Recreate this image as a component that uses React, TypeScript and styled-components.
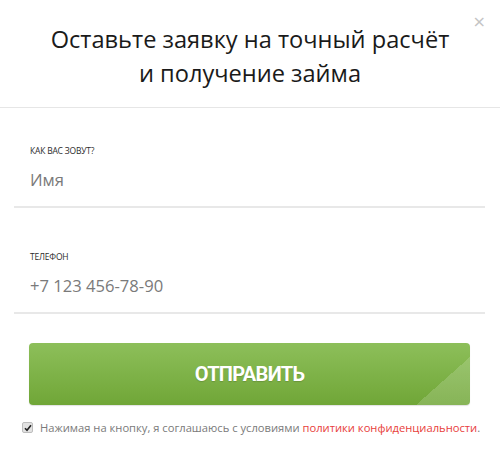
import styled, { createGlobalStyle } from "styled-components";

const GlobalStyle = createGlobalStyle`
  body {
    margin: 0;
    background: #ffffff;
    font-family: "Open Sans", "Noto Sans", sans-serif;
  }
`;

const Modal = styled.div`
  width: 500px;
  height: 462px;
  background: #ffffff;
  display: flex;
  flex-direction: column;
  position: relative;
`;

const Header = styled.div`
  padding: 22px 0 17px 0;
  border-bottom: 1px solid #e6e6e6;
`;

const Title = styled.h2`
  margin: 0;
  text-align: center;
  font-weight: 400;
  font-size: 23.6px;
  line-height: 34px;
  color: #1a1a1a;
`;

const Close = styled.span`
  position: absolute;
  top: 12px;
  right: 14px;
  font-size: 16px;
  line-height: 20px;
  color: #c4c4c4;
  font-family: "DejaVu Sans", sans-serif;
`;

const Form = styled.form`
  display: flex;
  flex-direction: column;
  padding: 0 15px 0 14px;
`;

const Field = styled.label<{ $top: number }>`
  display: flex;
  flex-direction: column;
  gap: 12px;
  margin-top: ${(p) => p.$top}px;
  padding: 0 0 15px 16px;
  border-bottom: 2px solid #e8e8e8;
`;

const Caption = styled.span`
  font-size: 8.5px;
  line-height: 12px;
  color: #2b2b2b;
  text-transform: uppercase;
  letter-spacing: -0.2px;
`;

const Value = styled.span`
  font-size: 16.6px;
  line-height: 22px;
  color: #7a7a7a;
`;

const SubmitButton = styled.button`
  margin: 29px 15px 0 15px;
  height: 62px;
  border: none;
  border-radius: 4px;
  color: #ffffff;
  font-family: "Roboto", "Open Sans", sans-serif;
  font-weight: 700;
  font-size: 20px;
  letter-spacing: -0.7px;
  text-shadow: 0 1px 1px rgba(0, 0, 0, 0.15);
  background:
    linear-gradient(to bottom right, transparent 50%, rgba(255, 255, 255, 0.16) 50%) right bottom / 54px 48px no-repeat,
    linear-gradient(#8dbf5a, #70a637);
  box-shadow: 0 1px 1px rgba(0, 0, 0, 0.12);
  cursor: pointer;
`;

const Consent = styled.div`
  display: flex;
  align-items: center;
  gap: 7px;
  margin: 15px 0 0 22px;
  font-size: 11.2px;
  color: #7a7a7a;
  white-space: nowrap;
`;

const Check = styled.span`
  width: 11px;
  height: 11px;
  border-radius: 2px;
  background: #e2e2e2;
  border: 1px solid #bdbdbd;
  box-sizing: border-box;
  display: flex;
  align-items: center;
  justify-content: center;
`;

const PolicyLink = styled.a`
  color: #e8403b;
  text-decoration: none;
`;

export default function App() {
  return (
    <>
      <GlobalStyle />
      <Modal>
        <Header>
          <Title>
            Оставьте заявку на точный расчёт
            <br />и получение займа
          </Title>
        </Header>
        <Close>×</Close>
        <Form>
          <Field $top={37}>
            <Caption>Как вас зовут?</Caption>
            <Value>Имя</Value>
          </Field>
          <Field $top={43}>
            <Caption>Телефон</Caption>
            <Value>+7 123 456-78-90</Value>
          </Field>
          <SubmitButton type="button">ОТПРАВИТЬ</SubmitButton>
        </Form>
        <Consent>
          <Check>
            <svg width="8" height="8" viewBox="0 0 8 8">
              <path d="M1 4.2 L3 6.3 L7 1.2" fill="none" stroke="#222" strokeWidth="1.6" />
            </svg>
          </Check>
          <span>
            Нажимая на кнопку, я соглашаюсь с условиями{" "}
            <PolicyLink href="#">политики конфиденциальности</PolicyLink>.
          </span>
        </Consent>
      </Modal>
    </>
  );
}
